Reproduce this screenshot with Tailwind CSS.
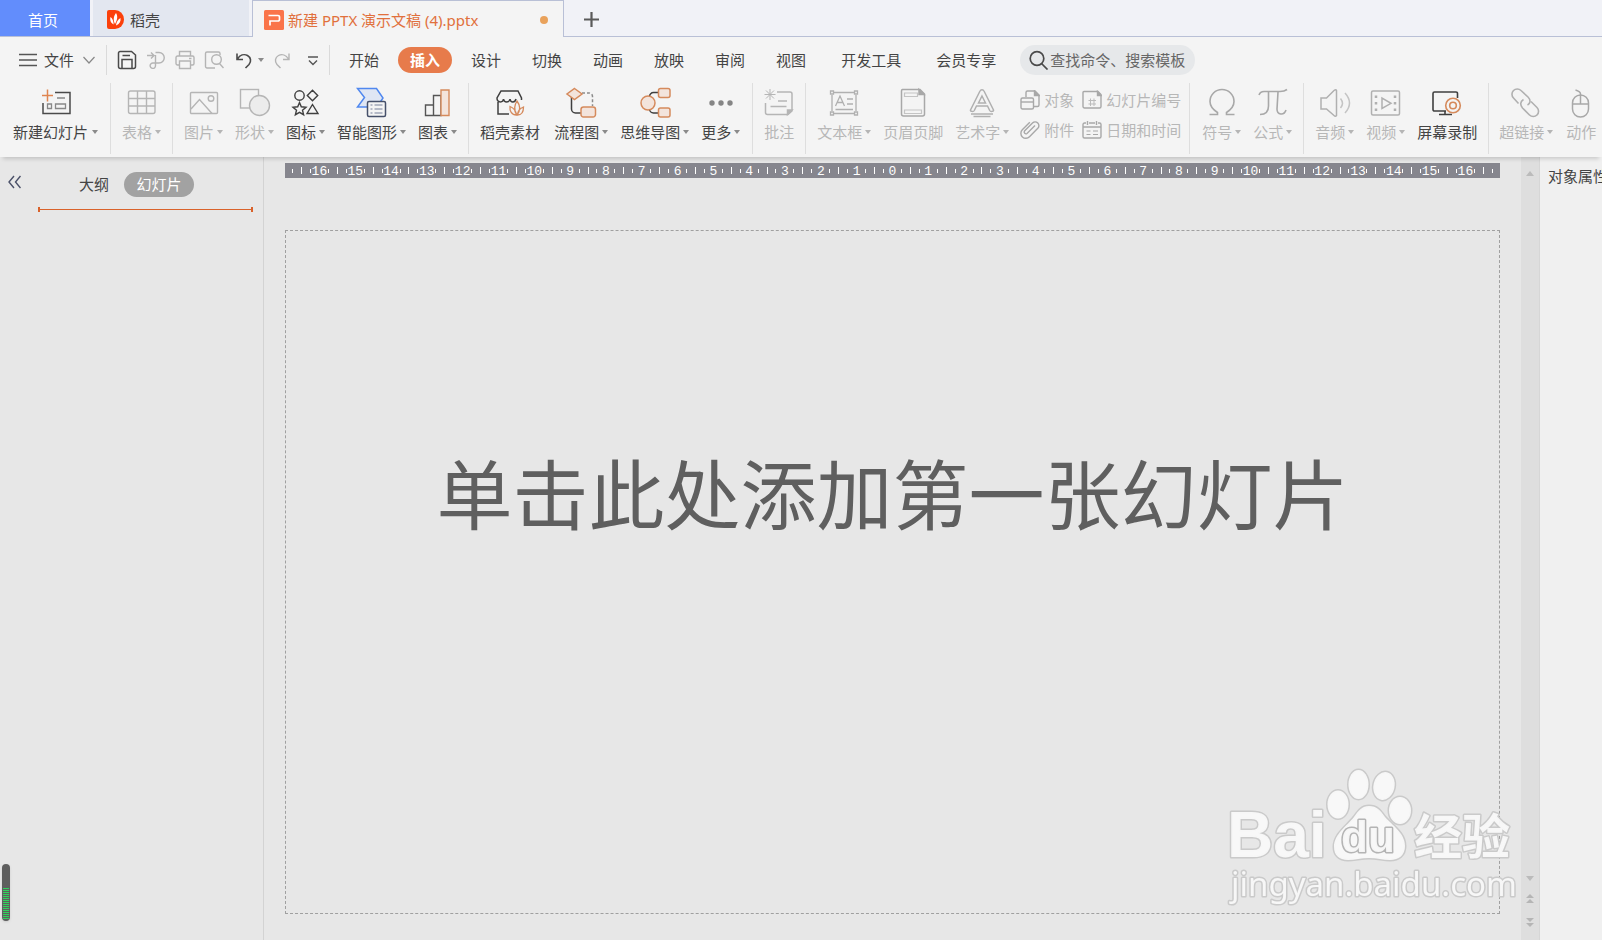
<!DOCTYPE html>
<html lang="zh-CN">
<head>
<meta charset="utf-8">
<title>新建 PPTX 演示文稿 (4).pptx</title>
<script src="https://cdn.jsdelivr.net/npm/@tailwindcss/browser@4"></script>
</head>
<body class="flex min-h-screen flex-col overflow-hidden bg-[#e7e7e7] font-['Noto_Sans','Noto_Sans_CJK_SC',sans-serif] text-[15px] leading-5 text-[#444]">

<!-- document tabs -->
<nav class="flex h-[37px] shrink-0 bg-[#f1f2f7]" aria-label="文档标签">
  <button class="w-[90px] border-b border-[#b9c0d6] bg-[#628dfc] pr-1 pt-[3px] text-white">首页</button>
  <div class="w-[3px] border-b border-[#b9c0d6]"></div>
  <button class="flex w-[156px] items-center gap-1.5 border-b border-[#b9c0d6] bg-[#e3e7f0] pl-3.5 pt-[3px]">
    <svg width="17" height="19" viewBox="0 0 17 19"><path d="M0 2a2 2 0 0 1 2-2h6a9 9.500 0 0 1 0 19H2a2 2 0 0 1-2-2z" fill="#fb400b"/><path d="M9 3c2 3 1.500 7-1 11C6 10 6.500 6 9 3zM3.500 7c2 1.500 3 4 3.200 7.500C3.500 13 2.800 10 3.500 7zM13.500 8c.5 3.500-1 6-4.500 7.500C9.300 12 11 9.500 13.500 8z" fill="#fff"/></svg>
    稻壳
  </button>
  <div class="w-[3px] border-b border-[#b9c0d6]"></div>
  <div class="flex w-[312px] items-center border-x border-t border-[#b9c0d6] bg-[#f4f4f4] pl-[11px] pr-[15px] pt-0.5 text-[#e1703c]">
    <svg class="mr-1" width="20" height="20" viewBox="0 0 20 20"><rect width="20" height="20" rx="1.500" fill="#fa7449"/><path d="M4.500 5.500H14a1.500 1.500 0 0 1 1.500 1.500v2.500A1.500 1.500 0 0 1 14 11H6v4.500" fill="none" stroke="#fff" stroke-width="1.700"/></svg>
    <span class="flex-1 whitespace-nowrap">新建 PPTX 演示文稿 (4).pptx</span>
    <span class="size-2 rounded-full bg-[#e9a25b]"></span>
  </div>
  <button class="flex flex-1 items-center border-b border-[#b9c0d6] pl-5 pt-0.5" aria-label="新建标签">
    <svg width="15" height="15" viewBox="0 0 15 15"><path d="M7.500 0v15M0 7.500h15" stroke="#5a5a5a" stroke-width="2.200"/></svg>
  </button>
</nav>

<!-- menu row -->
<div class="flex h-[46px] shrink-0 items-center whitespace-nowrap bg-[#f4f4f4] pl-[19px]">
  <button class="flex items-center">
    <svg width="18" height="14" viewBox="0 0 18 14" stroke="#555" stroke-width="1.300"><path d="M0 1.500h18M0 7h18M0 12.500h18"/></svg>
    <span class="mx-[7px]">文件</span>
    <svg class="ml-0.5" width="12" height="8" viewBox="0 0 12 8" fill="none" stroke="#888" stroke-width="1.200"><path d="M.5 1L6 7l5.500-6"/></svg>
  </button>
  <div class="ml-[11px] h-[30px] w-px bg-[#dadada]"></div>
  <div class="ml-2.5 flex items-center gap-[9px]">
    <button aria-label="保存"><svg width="20" height="20" viewBox="0 0 20 20" fill="none" stroke="#4a4a4a" stroke-width="1.500"><path d="M3 1.500h11.500l4 3.500v11.500a2 2 0 0 1-2 2h-13a2 2 0 0 1-2-2V3a1.500 1.500 0 0 1 1.500-1.500zM5 18V9.500h10V18M5.500 5.500H13"/></svg></button>
    <button aria-label="输出为PDF"><svg width="20" height="20" viewBox="0 0 20 20" fill="none" stroke="#b4b4b4" stroke-width="1.400"><path d="M1 5.500h6.500M5 2.500l3 3-3 3M9.500 2.500h3.500a5 5 0 0 1 0 10.500H7a2.700 2.700 0 1 0 2.500 2.700V5"/></svg></button>
    <button aria-label="打印"><svg width="20" height="20" viewBox="0 0 20 20" fill="none" stroke="#b4b4b4" stroke-width="1.400"><path d="M4.500 6V1.500h11V6M4.500 15h-2a1.500 1.500 0 0 1-1.500-1.500v-6A1.500 1.500 0 0 1 2.500 6h15A1.500 1.500 0 0 1 19 7.500v6a1.500 1.500 0 0 1-1.500 1.500h-2M4.500 11h11v7.500h-11zM14 8.500h2.500"/></svg></button>
    <button aria-label="打印预览"><svg width="20" height="20" viewBox="0 0 20 20" fill="none" stroke="#b4b4b4" stroke-width="1.400"><path d="M11 18H3a1.500 1.500 0 0 1-1.500-1.500v-13A1.500 1.500 0 0 1 3 2h11.500A1.500 1.500 0 0 1 16 3.500V5M15.500 13.500l4 4.500"/><circle cx="12.500" cy="9.500" r="4.800"/></svg></button>
    <button class="ml-px flex items-center gap-1" aria-label="撤销"><svg width="20" height="20" viewBox="0 0 20 20" fill="none" stroke="#4a4a4a" stroke-width="1.600"><path d="M3 3.500v6h6M3.500 9C6 5 10 3.700 13.500 5.500c3.500 2 4 6 1.500 9L11.500 18"/></svg><svg width="6" height="4" viewBox="0 0 6 4"><path d="M0 0h6L3 4z" fill="#8a8a8a"/></svg></button>
    <button aria-label="恢复"><svg width="20" height="20" viewBox="0 0 20 20" fill="none" stroke="#b4b4b4" stroke-width="1.400"><path d="M16 3.500v6h-6M15.500 9C13 5 9 3.700 5.500 5.500c-3.500 2-4 6-1.500 9L7.500 18"/></svg></button>
    <button class="ml-[5px]" aria-label="自定义快速访问工具栏"><svg width="12" height="20" viewBox="0 0 12 20" fill="none" stroke="#555" stroke-width="1.400"><path d="M1 7h10M2 10.500l4 4 4-4"/></svg></button>
  </div>
  <div class="ml-2.5 h-[30px] w-px bg-[#dadada]"></div>
  <div class="ml-[19px] flex items-center gap-[31px]">
    <button>开始</button>
    <button class="-mx-3 h-[26px] w-[54px] rounded-full bg-[#e77b4b] font-bold text-white">插入</button>
    <button>设计</button>
    <button>切换</button>
    <button>动画</button>
    <button>放映</button>
    <button>审阅</button>
    <button>视图</button>
    <button class="ml-1">开发工具</button>
    <button class="ml-1">会员专享</button>
  </div>
  <label class="ml-6 flex h-[30px] w-[175px] items-center rounded-full bg-[#e6e8ea] pl-[9px]">
    <svg class="shrink-0" width="20" height="20" viewBox="0 0 20 20" fill="none" stroke="#4a4a4a" stroke-width="1.700"><circle cx="8" cy="8.500" r="6.800"/><path d="M12.500 13.500l6 6"/></svg>
    <input class="ml-px w-36 bg-transparent outline-none placeholder:text-[#666]" type="text" aria-label="搜索" placeholder="查找命令、搜索模板">
  </label>
</div>

<!-- ribbon -->
<div class="relative z-10 flex h-[74px] shrink-0 overflow-hidden whitespace-nowrap bg-[#f4f4f4] pb-[3px] shadow-[0_5px_4px_-3px_#00000028] [&_button]:shrink-0" role="toolbar" aria-label="插入">
  <div class="flex shrink-0 border-r border-[#dedede] pl-[13px] pr-3">
    <button class="flex flex-col items-center gap-1 pt-[3px]">
      <svg width="32" height="32" viewBox="0 0 32 32" fill="none" stroke="#4a4a4a" stroke-width="1.500"><path d="M15 6.500h15v21H3V17"/><path d="M7.500 3.500v12M2 9.500h11" stroke="#df8550"/><path d="M17 12h8M7.500 18h4v4.500h-4zM15.500 18h10v4.500h-10z" stroke="#888" stroke-width="1.300"/></svg>
      <span class="flex items-center gap-1">新建幻灯片<svg width="6" height="4" viewBox="0 0 6 4"><path d="M0 0h6L3 4z" fill="#8a8a8a"/></svg></span>
    </button>
  </div>
  <div class="flex shrink-0 border-r border-[#dedede] px-[11px] text-[#b7b7b7]">
    <button class="flex flex-col items-center gap-1 pt-[3px]">
      <svg width="32" height="32" viewBox="0 0 32 32" fill="none" stroke="#b5b5b5" stroke-width="1.400"><rect x="2.500" y="5" width="26.500" height="22.500" rx="2"/><path d="M2.500 12.500H29M2.500 20H29M11.500 5v22.500M20.500 5v22.500"/></svg>
      <span class="flex items-center gap-[3px]">表格<svg width="6" height="4" viewBox="0 0 6 4"><path d="M0 0h6L3 4z" fill="#b5b5b5"/></svg></span>
    </button>
  </div>
  <div class="flex shrink-0 gap-3 border-r border-[#dedede] px-[11px]">
    <button class="flex flex-col items-center gap-1 pt-[3px] text-[#b7b7b7]">
      <svg width="32" height="32" viewBox="0 0 32 32" fill="none" stroke="#b5b5b5" stroke-width="1.400"><rect x="2.500" y="6.500" width="27" height="21" rx="1"/><path d="M3 23l8.500-9.500 12.500 14"/><circle cx="23" cy="12.500" r="2.800"/></svg>
      <span class="flex items-center gap-[3px]">图片<svg width="6" height="4" viewBox="0 0 6 4"><path d="M0 0h6L3 4z" fill="#b5b5b5"/></svg></span>
    </button>
    <button class="flex flex-col items-center gap-1 pt-[3px] text-[#b7b7b7]">
      <svg width="32" height="32" viewBox="0 0 32 32" fill="none" stroke="#b5b5b5" stroke-width="1.400"><rect x="1.500" y="3.500" width="18" height="18.500"/><circle cx="20.500" cy="19.500" r="10" fill="#ececec"/></svg>
      <span class="flex items-center gap-[3px]">形状<svg width="6" height="4" viewBox="0 0 6 4"><path d="M0 0h6L3 4z" fill="#b5b5b5"/></svg></span>
    </button>
    <button class="flex flex-col items-center gap-1 pt-[3px]">
      <svg width="32" height="32" viewBox="0 0 32 32" fill="none" stroke="#3f3f3f" stroke-width="1.400"><circle cx="9.500" cy="9.500" r="4.700"/><path d="M22.500 4.200l5.200 5.300-5.200 5.300-5.200-5.300zM22.500 18.500l5.500 9H17zM9.500 16.500l1.800 4.300 4.700.4-3.500 3 1.100 4.500-4.100-2.400-4.100 2.400 1.100-4.500-3.500-3 4.700-.4z"/></svg>
      <span class="flex items-center gap-[3px]">图标<svg width="6" height="4" viewBox="0 0 6 4"><path d="M0 0h6L3 4z" fill="#8a8a8a"/></svg></span>
    </button>
    <button class="flex flex-col items-center gap-1 pt-[3px]">
      <svg width="32" height="32" viewBox="0 0 32 32" fill="none"><path d="M1.500 2.500h19L27 12l-6 9H1.500l7-9.500z" fill="#dfe6f4" stroke="#5088ef" stroke-width="1.500"/><rect x="11.500" y="15.500" width="18" height="15" rx="1.500" fill="#f4f4f4" stroke="#46506a" stroke-width="1.500"/><path d="M14.500 19h2M14.500 23h2M14.500 27h2M18.500 19h8M18.500 23h8M18.500 27h8" stroke="#77809a" stroke-width="1.200"/></svg>
      <span class="flex items-center gap-[3px]">智能图形<svg width="6" height="4" viewBox="0 0 6 4"><path d="M0 0h6L3 4z" fill="#8a8a8a"/></svg></span>
    </button>
    <button class="flex flex-col items-center gap-1 pt-[3px]">
      <svg width="32" height="32" viewBox="0 0 32 32" fill="none" stroke="#555" stroke-width="1.400"><path d="M3.500 19h8v10.500h-8zM11.500 9.500H19v20h-7.500z"/><path d="M19 4h8v25.500h-8z" fill="#f3e4dc" stroke="#d58a5c"/></svg>
      <span class="flex items-center gap-[3px]">图表<svg width="6" height="4" viewBox="0 0 6 4"><path d="M0 0h6L3 4z" fill="#8a8a8a"/></svg></span>
    </button>
  </div>
  <div class="flex shrink-0 gap-3 border-r border-[#dedede] pl-[11px] pr-3">
    <button class="mr-0.5 flex flex-col items-center gap-1 pt-[3px]">
      <svg width="32" height="32" viewBox="0 0 32 32" fill="none" stroke="#3f3f3f" stroke-width="1.500"><path d="M4 16v12h11M27.500 14v-2L24 5H7l-4 7c0 5 6 5 6.500 1 .5 4 6 4 6.500 0 .5 4 5 4 6 0"/><path d="M23 29c-4-5-2-11 0-14 3 4 4 9 0 14zM22.500 29c-5 0-7-4-6.500-8.500 4 1.500 6 4.500 6.500 8.500zM23.500 29c0-4 2.500-6.500 6-8 0 5-2 8-6 8z" stroke="#d58a5c" stroke-width="1.300"/></svg>
      <span>稻壳素材</span>
    </button>
    <button class="flex flex-col items-center gap-1 pt-[3px]">
      <svg width="32" height="32" viewBox="0 0 32 32" fill="none" stroke-width="1.500"><path d="M6.500 11v12a4 4 0 0 0 4 4H16" stroke="#3f3f3f"/><path d="M17 7h7a3.500 3.500 0 0 1 3.500 3.500V20" stroke="#8a8a8a" stroke-dasharray="3 2"/><path d="M9.500 2.500l7.500 5.500-7.500 5.500L2 8zM18.500 21H28a2.500 2.500 0 0 1 2.500 2.500v5A2.500 2.500 0 0 1 28 31h-9.500a2.500 2.500 0 0 1-2.500-2.500v-5a2.500 2.500 0 0 1 2.500-2.500z" fill="#f3e4dc" stroke="#d58a5c"/></svg>
      <span class="flex items-center gap-[3px]">流程图<svg width="6" height="4" viewBox="0 0 6 4"><path d="M0 0h6L3 4z" fill="#8a8a8a"/></svg></span>
    </button>
    <button class="flex flex-col items-center gap-1 pt-[3px]">
      <svg width="32" height="32" viewBox="0 0 32 32" fill="none" stroke-width="1.500"><path d="M19 6.500h-4.500a4 4 0 0 0-4 4M19 27h-4.500a4 4 0 0 1-4-4" stroke="#3f3f3f"/><circle cx="9" cy="17" r="7" fill="#f3e4dc" stroke="#d58a5c"/><rect x="19.500" y="2.500" width="11.500" height="9" rx="2" fill="#f3e4dc" stroke="#d58a5c"/><rect x="19.500" y="22" width="11.500" height="9" rx="2" fill="#f3e4dc" stroke="#d58a5c"/></svg>
      <span class="flex items-center gap-[3px]">思维导图<svg width="6" height="4" viewBox="0 0 6 4"><path d="M0 0h6L3 4z" fill="#8a8a8a"/></svg></span>
    </button>
    <button class="flex flex-col items-center gap-1 pt-[3px]">
      <svg width="32" height="32" viewBox="0 0 32 32" fill="#858585"><circle cx="7" cy="17" r="2.700"/><circle cx="16" cy="17" r="2.700"/><circle cx="25" cy="17" r="2.700"/></svg>
      <span class="flex items-center gap-[3px]">更多<svg width="6" height="4" viewBox="0 0 6 4"><path d="M0 0h6L3 4z" fill="#8a8a8a"/></svg></span>
    </button>
  </div>
  <div class="flex shrink-0 border-r border-[#dedede] px-[10px] text-[#b7b7b7]">
    <button class="flex flex-col items-center gap-1 pt-[3px]">
      <svg width="32" height="32" viewBox="0 0 32 32" fill="none" stroke="#b5b5b5" stroke-width="1.500"><path d="M14 6h13a2 2 0 0 1 2 2v17l-4 3.500H4.500a2 2 0 0 1-2-2V17M15 15h9M7.500 20.500h16"/><path d="M29 24l-4.500 4.500V24z" fill="#b5b5b5"/><path d="M7 3v11M1.500 8.500h11M3 4.500l8 8M11 4.500l-8 8" stroke-width="1"/></svg>
      <span>批注</span>
    </button>
  </div>
  <div class="flex shrink-0 gap-3 border-r border-[#dedede] pl-[11px] pr-2 text-[#b7b7b7]">
    <button class="flex flex-col items-center gap-1 pt-[3px]">
      <svg width="32" height="32" viewBox="0 0 32 32" fill="none" stroke="#b0b0b0" stroke-width="1.300"><path d="M6 6.500h20M6 27.500h20M4 9v16M28 9v16"/><path d="M2.500 5h3v3h-3zM26.500 5h3v3h-3zM2.500 26h3v3h-3zM26.500 26h3v3h-3zM7.500 20l4.500-10 4.500 10M9 16.500h6M19 13h6M19 18h6M7.500 23.500h17.500"/></svg>
      <span class="flex items-center gap-[3px]">文本框<svg width="6" height="4" viewBox="0 0 6 4"><path d="M0 0h6L3 4z" fill="#b5b5b5"/></svg></span>
    </button>
    <button class="flex flex-col items-center gap-1 pt-[3px]">
      <svg width="32" height="32" viewBox="0 0 32 32" fill="none" stroke="#a8a8a8" stroke-width="1.500"><path d="M5.500 3.500h17.500l4.500 4.500v20a2 2 0 0 1-2 2h-19a2 2 0 0 1-2-2V5a1.500 1.500 0 0 1 1-1.500z"/><path d="M22 3.500v5h5z" fill="#a8a8a8"/><path d="M7.500 7h13v3.500h-13zM7.500 24h17v3.500h-17z" stroke="#c4c4c4" stroke-width="1.200"/></svg>
      <span>页眉页脚</span>
    </button>
    <button class="flex flex-col items-center gap-1 pt-[3px]">
      <svg width="32" height="32" viewBox="0 0 32 32" fill="none" stroke="#b0b0b0" stroke-width="1.500"><path d="M14 5a2.200 2.200 0 0 1 4 0l9.500 19c.6 1.500-3 2-3.800.5L21.500 20h-11l-2.200 4.500C7.500 26 3.900 25.500 4.500 24zM16 10l3.500 7h-7zM5 28h22M7.500 30.500h17"/></svg>
      <span class="flex items-center gap-[3px]">艺术字<svg width="6" height="4" viewBox="0 0 6 4"><path d="M0 0h6L3 4z" fill="#b5b5b5"/></svg></span>
    </button>
    <div class="-ml-px grid grid-cols-[auto_auto] content-start gap-x-2 gap-y-[10px] pt-[7px]">
      <button class="flex items-center gap-1"><svg width="20" height="20" viewBox="0 0 20 20" fill="none" stroke="#a8a8a8" stroke-width="1.400"><path d="M6 7V2.500A1.500 1.500 0 0 1 7.500 1H15l4 4v10a1.500 1.500 0 0 1-1.500 1.500H14"/><path d="M14.500 1v4.500H19z" fill="#a8a8a8"/><rect x="1" y="8" width="12.500" height="11" rx="1.500"/><path d="M1 12h12"/></svg>对象</button>
      <button class="flex items-center gap-1"><svg width="20" height="20" viewBox="0 0 20 20" fill="none" stroke="#a8a8a8" stroke-width="1.400"><path d="M2 1.500h14l3 3v12a1.500 1.500 0 0 1-1.500 1.500h-15A1.500 1.500 0 0 1 1 16.500v-14a1 1 0 0 1 1-1z"/><path d="M15.500 1.500v4H19z" fill="#a8a8a8"/><path d="M8.500 8.500v7.500M12 8.500v7.500M6.500 10.500h7.500M6.500 14h7.500" stroke-width="1" stroke="#bbb"/></svg>幻灯片编号</button>
      <button class="flex items-center gap-1"><svg width="20" height="20" viewBox="0 0 20 20" fill="none" stroke="#a8a8a8" stroke-width="1.400"><path d="M15 5.500l-8 8a1.800 1.800 0 0 1-2.500-2.500l8-8a3.600 3.600 0 0 1 5.300 5.300l-8.300 8.500a5 5 0 0 1-7.200-7l7.500-7.500"/></svg>附件</button>
      <button class="flex items-center gap-1"><svg width="20" height="20" viewBox="0 0 20 20" fill="none" stroke="#a8a8a8" stroke-width="1.400"><path d="M4 3H2.500A1.500 1.500 0 0 0 1 4.500v12A1.500 1.500 0 0 0 2.500 18h15a1.500 1.500 0 0 0 1.500-1.500v-12A1.500 1.500 0 0 0 17.500 3H16M7 3h6M5.500 1v4M14.500 1v4M1 7h18"/><path d="M4.500 11h4M11 11h5M4.500 14.500h4M11 14.500h5" stroke-width="1"/></svg>日期和时间</button>
    </div>
  </div>
  <div class="flex shrink-0 gap-3 border-r border-[#dedede] pl-3 pr-[11px] text-[#b7b7b7]">
    <button class="flex flex-col items-center gap-1 pt-[3px]">
      <svg width="32" height="32" viewBox="0 0 32 32" fill="none" stroke="#a8a8a8" stroke-width="1.600"><path d="M3.500 28.500h8v-2C6 23 4 19.500 4 15.500a12 12 0 0 1 24 0c0 4-2 7.500-7.500 11v2h8"/></svg>
      <span class="flex items-center gap-[3px]">符号<svg width="6" height="4" viewBox="0 0 6 4"><path d="M0 0h6L3 4z" fill="#b5b5b5"/></svg></span>
    </button>
    <button class="flex flex-col items-center gap-1 pt-[3px]">
      <svg width="32" height="32" viewBox="0 0 32 32" fill="none" stroke="#a8a8a8" stroke-width="1.600"><path d="M2 9c1-3 2.500-3.500 5-3.500h16c3 0 5-.5 7-2M11.500 6v14c0 6-3 8.500-8.500 8.500M21 6l-1 17c0 6 7 7 9 1"/></svg>
      <span class="flex items-center gap-[3px]">公式<svg width="6" height="4" viewBox="0 0 6 4"><path d="M0 0h6L3 4z" fill="#b5b5b5"/></svg></span>
    </button>
  </div>
  <div class="flex shrink-0 gap-3 border-r border-[#dedede] px-[11px] text-[#b7b7b7]">
    <button class="flex flex-col items-center gap-1 pt-[3px]">
      <svg width="32" height="32" viewBox="0 0 32 32" fill="none" stroke="#b0b0b0" stroke-width="1.500"><path d="M2 12h5.500L15 4.500q2-1.500 2.500 0v25q-1 1.500-2.500 0L7.500 23H2z"/><path d="M21.500 12.500q4 5 0 9.500M26 7q9 10 0 20" stroke="#c4c4c4"/></svg>
      <span class="flex items-center gap-[3px]">音频<svg width="6" height="4" viewBox="0 0 6 4"><path d="M0 0h6L3 4z" fill="#b5b5b5"/></svg></span>
    </button>
    <button class="flex flex-col items-center gap-1 pt-[3px]">
      <svg width="32" height="32" viewBox="0 0 32 32" fill="none" stroke="#b0b0b0" stroke-width="1.500"><rect x="1.500" y="5" width="28" height="24" rx="1.500"/><path d="M12 12v10.500l9-5.200z"/><path d="M6 9.500v15.500M25 9.500v15.500" stroke-width="2.500" stroke-dasharray="2.500 4"/></svg>
      <span class="flex items-center gap-[3px]">视频<svg width="6" height="4" viewBox="0 0 6 4"><path d="M0 0h6L3 4z" fill="#b5b5b5"/></svg></span>
    </button>
    <button class="flex flex-col items-center gap-1 pt-[3px] text-[#444]">
      <svg width="32" height="32" viewBox="0 0 32 32" fill="none" stroke="#3f3f3f" stroke-width="1.600"><path d="M26.500 12V7.500A1.500 1.500 0 0 0 25 6H3.500A1.500 1.500 0 0 0 2 7.500v16A1.500 1.500 0 0 0 3.500 25H15M14 25v3.500M8 28.500h13"/><circle cx="22" cy="19.500" r="7.300" stroke="#d58a5c" fill="#f4f4f4"/><circle cx="22" cy="19.500" r="3.300" stroke="#d58a5c"/></svg>
      <span>屏幕录制</span>
    </button>
  </div>
  <div class="flex shrink-0 gap-3 px-[10px] text-[#b7b7b7]">
    <button class="flex flex-col items-center gap-1 pt-[3px]">
      <svg width="32" height="32" viewBox="0 0 32 32" fill="none" stroke="#b0b0b0" stroke-width="1.600"><path d="M8.500 17.500l-5-5.500A5.300 5.300 0 0 1 11 4.500l7 6.500c3 3 2.500 6.500-.5 8"/><path d="M21 15.500l6 6a5.300 5.300 0 0 1-7.500 7.500l-7-7c-2.500-3-2.500-6.500 1-8.500"/></svg>
      <span class="flex items-center gap-[3px]">超链接<svg width="6" height="4" viewBox="0 0 6 4"><path d="M0 0h6L3 4z" fill="#b5b5b5"/></svg></span>
    </button>
    <button class="flex flex-col items-center gap-1 pt-[3px]">
      <svg width="32" height="32" viewBox="0 0 32 32" fill="none" stroke="#a8a8a8" stroke-width="1.500"><rect x="7.500" y="9" width="16" height="22" rx="8"/><path d="M7.500 18h16M15.500 18V8c0-2-1.500-3-5-4"/></svg>
      <span>动作</span>
    </button>
  </div>
</div>

<!-- workspace -->
<div class="flex flex-1">
  <aside class="w-[264px] shrink-0 border-r border-[#d3d3d3] pt-[15px]">
    <div class="flex h-[25px] items-center pl-2">
      <button class="self-start pt-[3px]" aria-label="收起"><svg width="13" height="14" viewBox="0 0 13 14" fill="none" stroke="#4a5068" stroke-width="1.400"><path d="M6 1L1 7l5 6M12.500 1l-5 6 5 6"/></svg></button>
      <button class="ml-[58px] pb-0.5">大纲</button>
      <button class="ml-[15px] h-[25px] w-[70px] rounded-full bg-[#a2a2a2] pb-0.5 text-white">幻灯片</button>
    </div>
    <div class="ml-[38px] mr-[10px] mt-[10px] flex h-[5px] items-center border-x-2 border-[#d9622b]"><div class="h-px flex-1 bg-[#d9622b]"></div></div>
  </aside>

  <main class="flex min-w-0 flex-1 flex-col pb-[26px] pl-[21px] pr-[21px] pt-1.5">
    <div id="ruler" class="flex h-[15px] items-center overflow-hidden bg-[#86868e] font-['Liberation_Mono',monospace] text-[13px] leading-[15px] text-white"></div>
    <button class="mt-[52px] flex flex-1 items-start justify-center whitespace-nowrap border border-dashed border-[#a0a0a0] pt-[224px] text-[76px] leading-[80px] text-[#5f5f5f]">单击此处添加第一张幻灯片</button>
  </main>

  <div class="flex w-[18px] shrink-0 flex-col items-center bg-[#dedede] pb-3 pt-[14px]" aria-hidden="true">
    <svg width="8" height="5" viewBox="0 0 8 5"><path d="M0 5l4-5 4 5z" fill="#bbb"/></svg>
    <div class="flex-1"></div>
    <svg width="8" height="5" viewBox="0 0 8 5"><path d="M0 0h8L4 5z" fill="#bbb"/></svg>
    <svg class="mt-[13px]" width="8" height="10" viewBox="0 0 8 10"><path d="M0 4l4-4 4 4zM0 9l4-4 4 4z" fill="#b5b5b5"/></svg>
    <svg class="mt-[14px]" width="8" height="10" viewBox="0 0 8 10"><path d="M0 0h8L4 4zM0 5h8L4 9z" fill="#b5b5b5"/></svg>
  </div>
  <aside class="w-[63px] shrink-0 overflow-hidden whitespace-nowrap border-l border-[#d6d6d6] bg-[#f0f0f0] pl-2 pt-[9px]">对象属性</aside>
</div>

<!-- floating level meter -->
<div class="fixed bottom-[19px] left-0.5 flex h-[57px] w-2 flex-col justify-end overflow-hidden rounded-full bg-[#5e5e5e] px-px pb-0.5 shadow">
  <div class="h-[31px] bg-[repeating-linear-gradient(#2fd35c_0_1px,#5e5e5e_1px_2px)]"></div>
</div>

<!-- site mark -->
<svg class="pointer-events-none fixed bottom-[30px] right-[82px]" width="300" height="150" viewBox="0 0 300 150" fill="#f9f9f9" fill-opacity=".95" stroke="#cacaca" stroke-width="3" stroke-linejoin="round" paint-order="stroke">
  <text x="7" y="97" font-family="Liberation Sans, sans-serif" font-weight="700" font-size="64">Bai</text>
  <ellipse cx="118" cy="44.500" rx="10.500" ry="14"/>
  <ellipse cx="138.500" cy="24.500" rx="10" ry="14.500"/>
  <ellipse cx="164" cy="26" rx="10.500" ry="14" transform="rotate(12 164 26)"/>
  <ellipse cx="180" cy="50.500" rx="11" ry="13.500"/>
  <path d="M149 46c8 0 11 4 16 11 7 8 20 16 20 29 0 9-6 14-15 14-7 0-13-2-21-2s-14 2-21 2c-9 0-14-5-14-13 0-13 13-21 20-30 5-7 8-11 15-11z"/>
  <text x="121" y="92" font-family="Liberation Sans, sans-serif" font-weight="700" font-size="44" fill="#f9f9f9" stroke="#b4b4b4">du</text>
  <text x="194" y="94" font-family="Noto Sans CJK SC, sans-serif" font-weight="700" font-size="48">经验</text>
  <text x="11" y="136" font-family="Noto Sans, sans-serif" font-size="33">jingyan.baidu.com</text>
</svg>

<script>
  // Centimetre ruler, zero in the middle, with quarter and half marks.
  const ruler = document.getElementById('ruler');
  const small = '<i class="h-1 w-px shrink-0 bg-white"></i>';
  const half = '<i class="h-[7px] w-px shrink-0 bg-white"></i>';
  let html = `<span class="flex w-4 shrink-0 items-center pl-[7px]">${small}</span>${half}`;
  for (let n = -16; n <= 16; n++) {
    html += `<span class="flex flex-1 items-center justify-center">${small}<b class="w-[17px] pt-0.5 text-center font-normal">${Math.abs(n)}</b>${small}</span>${half}`;
  }
  html += `<span class="flex w-4 shrink-0 items-center justify-end pr-[7px]">${small}</span>`;
  ruler.innerHTML = html;
</script>
</body>
</html>
